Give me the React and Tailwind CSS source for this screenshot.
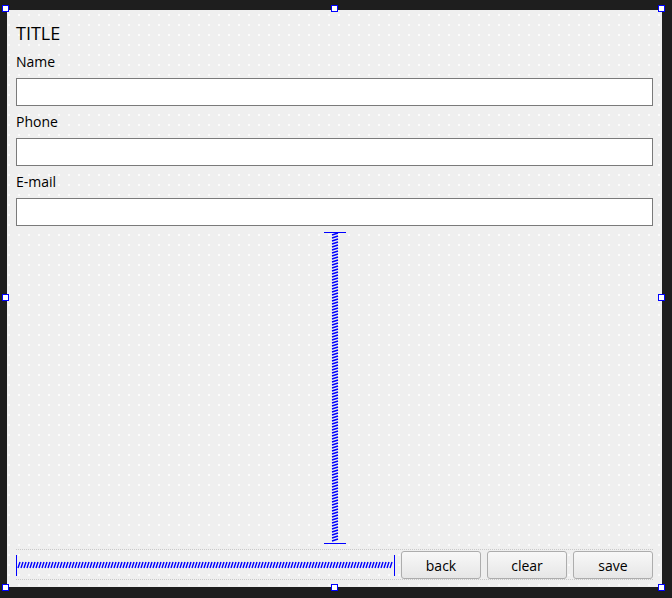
import React from "react";

function hatch(len, amp, step, vertical) {
  let d = "";
  for (let i = 0; i + 2 <= len; i += step) {
    d += vertical ? `M0 ${i + 2} L${amp} ${i} ` : `M${i} ${amp} L${i + 2} 0 `;
  }
  return d;
}

function Handle({ className }) {
  return <div className={`absolute w-[7px] h-[7px] bg-white border border-[#0000ff] ${className}`} />;
}

function Field({ label }) {
  return (
    <div className="flex flex-col">
      <div className="h-[20px] text-[14px] leading-[20px] text-[#000] mt-[6px]">{label}</div>
      <div className="h-[28px] mt-[6px] bg-white border border-[#7a7a7a]" />
    </div>
  );
}

function Btn({ children }) {
  return (
    <div className="w-[80px] h-[28px] rounded-[3px] border border-[#adadad] bg-[linear-gradient(#f8f8f8,#e6e6e6)] flex items-center justify-center text-[14px] text-black">
      {children}
    </div>
  );
}

export default function App() {
  return (
    <div
      className="w-[672px] h-[598px] bg-[#1e1e1e] pl-[7px] pt-[10px] relative"
      style={{ fontFamily: '"Open Sans", "Noto Sans", sans-serif' }}
    >
      <div className="relative w-[655px] h-[577px] bg-[#efefef] bg-[radial-gradient(circle,#fbfbfb_0.7px,transparent_1px)] bg-[length:10px_10px] bg-[position:-3px_0px] px-[9px] pt-[10px] flex flex-col">
        <div className="text-[18px] leading-[26px] text-black">TITLE</div>
        <Field label="Name" />
        <Field label="Phone" />
        <Field label="E-mail" />
        <div className="flex-1 flex justify-center pt-[6px] pb-[7px]">
          <svg width="22" height="312" viewBox="0 0 22 312" className="block">
            <line x1="0" y1="0.5" x2="22" y2="0.5" stroke="#0000ff" strokeWidth="1" />
            <line x1="0" y1="311.5" x2="22" y2="311.5" stroke="#0000ff" strokeWidth="1" />
            <g transform="translate(8,1)">
              <path d={hatch(310, 6, 3, true)} fill="none" stroke="#0000ff" strokeWidth="1.4" />
            </g>
          </svg>
        </div>
        <div className="flex items-center gap-[6px] h-[28px] mb-[8px] relative">
          <div className="absolute left-0 right-0 -top-[2px] border-t border-dotted border-[#c8c8c8]" />
          <div className="absolute left-0 right-0 -bottom-[1px] border-t border-dotted border-[#c8c8c8]" />
          <div className="flex-1 flex items-center h-full relative">
            <svg width="379" height="21" viewBox="0 0 379 21" className="block">
              <line x1="0.5" y1="0" x2="0.5" y2="21" stroke="#0000ff" strokeWidth="1" />
              <line x1="378.5" y1="0" x2="378.5" y2="21" stroke="#0000ff" strokeWidth="1" />
              <g transform="translate(2,7)">
                <path d={hatch(376, 6, 3, false)} fill="none" stroke="#0000ff" strokeWidth="1.4" />
              </g>
            </svg>
          </div>
          <Btn>back</Btn>
          <Btn>clear</Btn>
          <Btn>save</Btn>
        </div>
      </div>
      <Handle className="left-[2px] top-[5px]" />
      <Handle className="left-[331px] top-[5px]" />
      <Handle className="left-[658px] top-[5px]" />
      <Handle className="left-[2px] top-[294px]" />
      <Handle className="left-[658px] top-[294px]" />
      <Handle className="left-[2px] top-[584px]" />
      <Handle className="left-[331px] top-[584px]" />
      <Handle className="left-[658px] top-[584px]" />
    </div>
  );
}
